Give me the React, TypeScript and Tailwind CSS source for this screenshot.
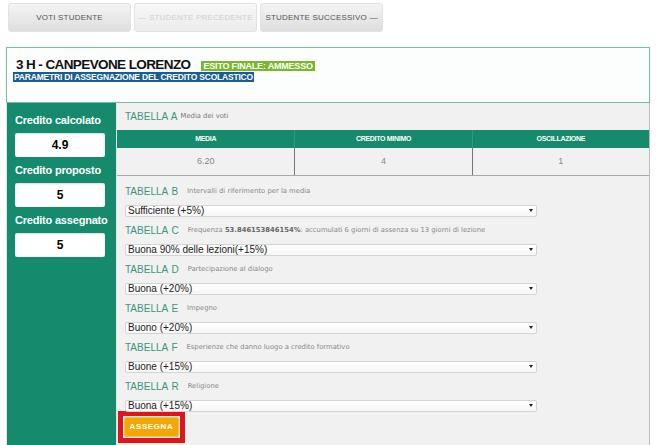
const font = { fontFamily: '"Liberation Sans", Arial, sans-serif' };
const smallFont = { fontFamily: '"DejaVu Sans", Verdana, sans-serif' };

const tabelle = [
  { key: 'B', desc: 'Intervalli di riferimento per la media', value: 'Sufficiente (+5%)' },
  {
    key: 'C',
    desc: (
      <>
        Frequenza <b className="text-[#666]">53.846153846154%</b>: accumulati 6 giorni di assenza su 13 giorni di lezione
      </>
    ),
    value: 'Buona 90% delle lezioni(+15%)',
  },
  { key: 'D', desc: 'Partecipazione al dialogo', value: 'Buona (+20%)' },
  { key: 'E', desc: 'Impegno', value: 'Buono (+20%)' },
  { key: 'F', desc: 'Esperienze che danno luogo a credito formativo', value: 'Buone (+15%)' },
  { key: 'R', desc: 'Religione', value: 'Buona (+15%)' },
];

function TopButton({ label, disabled }: { label: string; disabled?: boolean }) {
  return (
    <button
      className={`w-[123px] h-[29px] rounded-[3px] border border-[#e2e2e2] bg-gradient-to-b text-[8px] tracking-[0.2px] uppercase ${
        disabled ? 'text-[#d0d0d0] from-[#f7f7f7] to-[#ececec]' : 'text-[#555] from-[#f4f4f4] to-[#dedede]'
      }`}
    >
      {label}
    </button>
  );
}

function Credito({ label, value }: { label: string; value: string }) {
  return (
    <div>
      <div className="h-[14px] leading-[14px] text-[11px] font-bold text-white tracking-[-0.2px]">{label}</div>
      <div className="mt-[6px] w-[90px] h-[24px] bg-white rounded-[2px] shadow-[inset_0_1px_2px_rgba(0,0,0,0.15)] flex items-center justify-center text-[12px] font-bold text-black">
        {value}
      </div>
    </div>
  );
}

function Select({ value }: { value: string }) {
  return (
    <div className="relative w-[412px] h-[12px] bg-gradient-to-b from-white to-[#f6f6f6] border border-[#d4d4d4] rounded-[2px] flex items-center pl-[2px] text-[10px] leading-none text-[#222]">
      <span>{value}</span>
      <span className="absolute right-[3px] top-[3px] w-0 h-0 border-l-[2px] border-r-[2px] border-t-[3px] border-l-transparent border-r-transparent border-t-[#222]" />
    </div>
  );
}

export default function App() {
  return (
    <div className="w-[658px] h-[445px] overflow-hidden bg-white" style={font}>
      <div className="flex gap-[3px] pl-[8px] pt-[3px]">
        <TopButton label="Voti studente" />
        <TopButton label="— Studente precedente" disabled />
        <TopButton label="Studente successivo —" />
      </div>

      <div className="ml-[6px] mt-[15px] w-[644px]">
        <div className="h-[56px] border border-[#78bba5] bg-[#fcfefd] px-[6px] pt-[7px] shadow-[0_0_2px_rgba(0,0,0,0.08)]">
          <div className="flex items-end h-[16px] pl-[3px]">
            <span className="text-[13.5px] font-bold text-[#111] tracking-[-0.6px] leading-none">3 H - CANPEVONE LORENZO</span>
            <span className="ml-[11px] h-[10px] px-[2px] bg-[#78b82a] text-white text-[9px] font-bold leading-[10px] tracking-[-0.2px]">
              ESITO FINALE: AMMESSO
            </span>
          </div>
          <div className="mt-[1px] w-fit h-[10px] px-[1px] bg-[#1c5d8c] text-white text-[8.5px] font-bold leading-[10px] tracking-[-0.2px]">
            PARAMETRI DI ASSEGNAZIONE DEL CREDITO SCOLASTICO
          </div>
        </div>

        <div className="flex h-[342px] border-l border-[#d6e6df]">
          <div className="w-[109px] bg-[#168a6c] pl-[8px] pt-[10px]">
            <Credito label="Credito calcolato" value="4.9" />
            <div className="h-[6px]" />
            <Credito label="Credito proposto" value="5" />
            <div className="h-[6px]" />
            <Credito label="Credito assegnato" value="5" />
          </div>

          <div className="flex-1 bg-[#f1f1f1] border-l border-[#e4e4e4] border-r border-r-[#bdbdbd]">
            <div className="h-[27px] flex items-center pl-[8px] gap-[3px]">
              <span className="text-[10px] text-[#3a957c] [word-spacing:1px]">TABELLA A</span>
              <span className="text-[6.8px] text-[#777]" style={smallFont}>
                Media dei voti
              </span>
            </div>

            <div className="grid grid-cols-3 h-[18px] bg-[#168a6c] text-white text-[7px] font-bold tracking-[-0.3px]">
              <div className="flex items-center justify-center">MEDIA</div>
              <div className="flex items-center justify-center border-l border-[#2c9a7d]">CREDITO MINIMO</div>
              <div className="flex items-center justify-center border-l border-[#2c9a7d]">OSCILLAZIONE</div>
            </div>
            <div className="grid grid-cols-3 h-[28px] border-b border-[#a8a8a8] text-[9px] text-[#888]">
              <div className="flex items-center justify-center">6.20</div>
              <div className="flex items-center justify-center border-l border-[#777]">4</div>
              <div className="flex items-center justify-center border-l border-[#777]">1</div>
            </div>

            <div className="px-[8px] pt-[8px]">
              {tabelle.map((t) => (
                <div key={t.key} className="mb-[6px]">
                  <div className="h-[14px] flex items-center gap-[9px]">
                    <span className="text-[10px] text-[#3a957c] [word-spacing:1px]">TABELLA {t.key}</span>
                    <span className="text-[6.8px] text-[#888]" style={smallFont}>
                      {t.desc}
                    </span>
                  </div>
                  <div className="mt-[7px]">
                    <Select value={t.value} />
                  </div>
                </div>
              ))}
            </div>

            <div className="-mt-[7px] ml-[1px] w-[67px] border-[5px] border-[#e3131b] bg-[#f3f3f3] p-[1px]">
              <div className="h-[20px] bg-[#f5a700] border border-[#f7c24a] rounded-[2px] flex items-center justify-center text-white text-[8px] font-bold tracking-[0.6px]">
                ASSEGNA
              </div>
            </div>
          </div>
        </div>
      </div>
    </div>
  );
}
